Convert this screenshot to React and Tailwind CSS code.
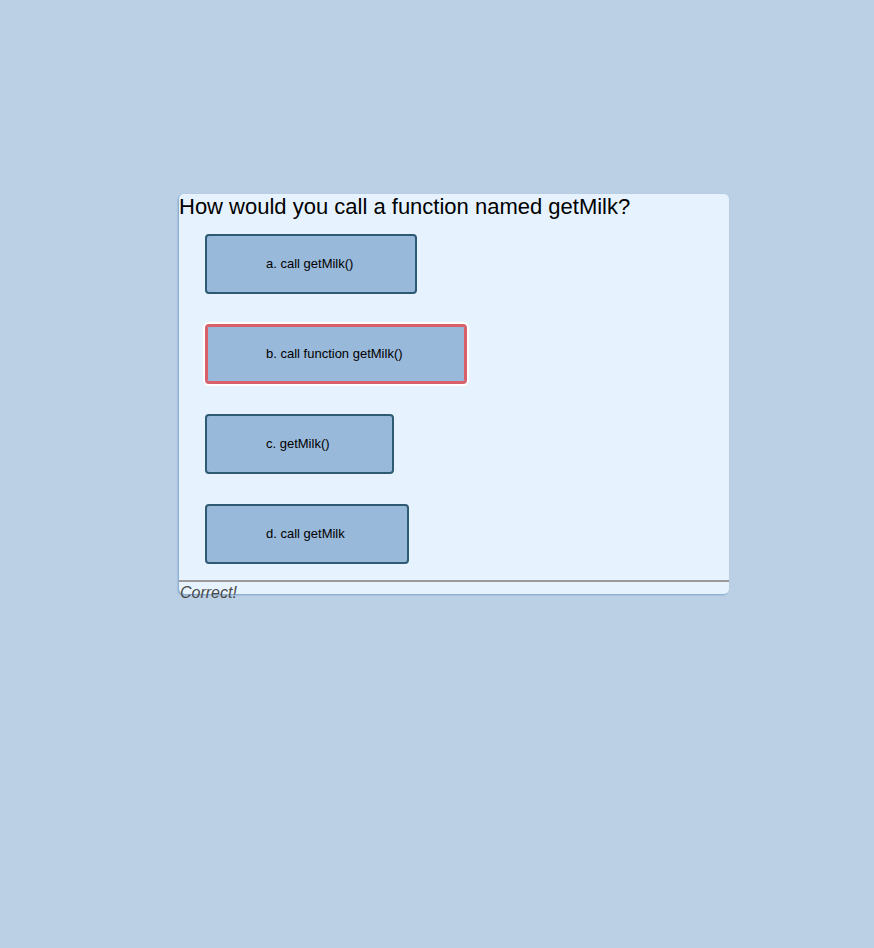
export default function App() {
  const opts = [
    { t: "a. call getMilk()", sel: false },
    { t: "b. call function getMilk()", sel: true },
    { t: "c. getMilk()", sel: false },
    { t: "d. call getMilk", sel: false },
  ];
  return (
    <div
      className="min-h-[948px] w-full bg-[#bcd0e5] pt-[194px] pl-[179px]"
      style={{ fontFamily: '"Liberation Sans", Arial, sans-serif' }}
    >
      <div className="flex h-[400px] w-[550px] flex-col rounded-[5px] bg-[#e6f3fe] shadow-[-1px_1px_2px_#7aa2ca]">
        <div className="shrink-0 text-[22px] leading-[25px] text-black">
          How would you call a function named getMilk?
        </div>
        <div className="mt-[15px] flex shrink-0 flex-col items-start gap-[30px] pl-[26px]">
          {opts.map((o) => (
            <button
              key={o.t}
              className={
                o.sel
                  ? "flex h-[60px] shrink-0 items-center rounded-[4px] border-2 border-[#d9606b] bg-[#98b9da] pl-[59px] pr-[62px] text-[13px] text-black shadow-[inset_0_0_0_1px_#d9606b,0_0_0_2px_#ffffff]"
                  : "flex h-[60px] shrink-0 items-center rounded-[4px] border-2 border-[#2f5a73] bg-[#98b9da] pl-[59px] pr-[62px] text-[13px] text-black"
              }
            >
              {o.t}
            </button>
          ))}
        </div>
        <div className="mt-[16px] h-[2px] w-full shrink-0 bg-[#9a9a9a]" />
        <div className="shrink-0 pl-px pt-[2px] text-[16px] italic leading-[18px] text-[#4a4a4a]">Correct!</div>
      </div>
    </div>
  );
}
